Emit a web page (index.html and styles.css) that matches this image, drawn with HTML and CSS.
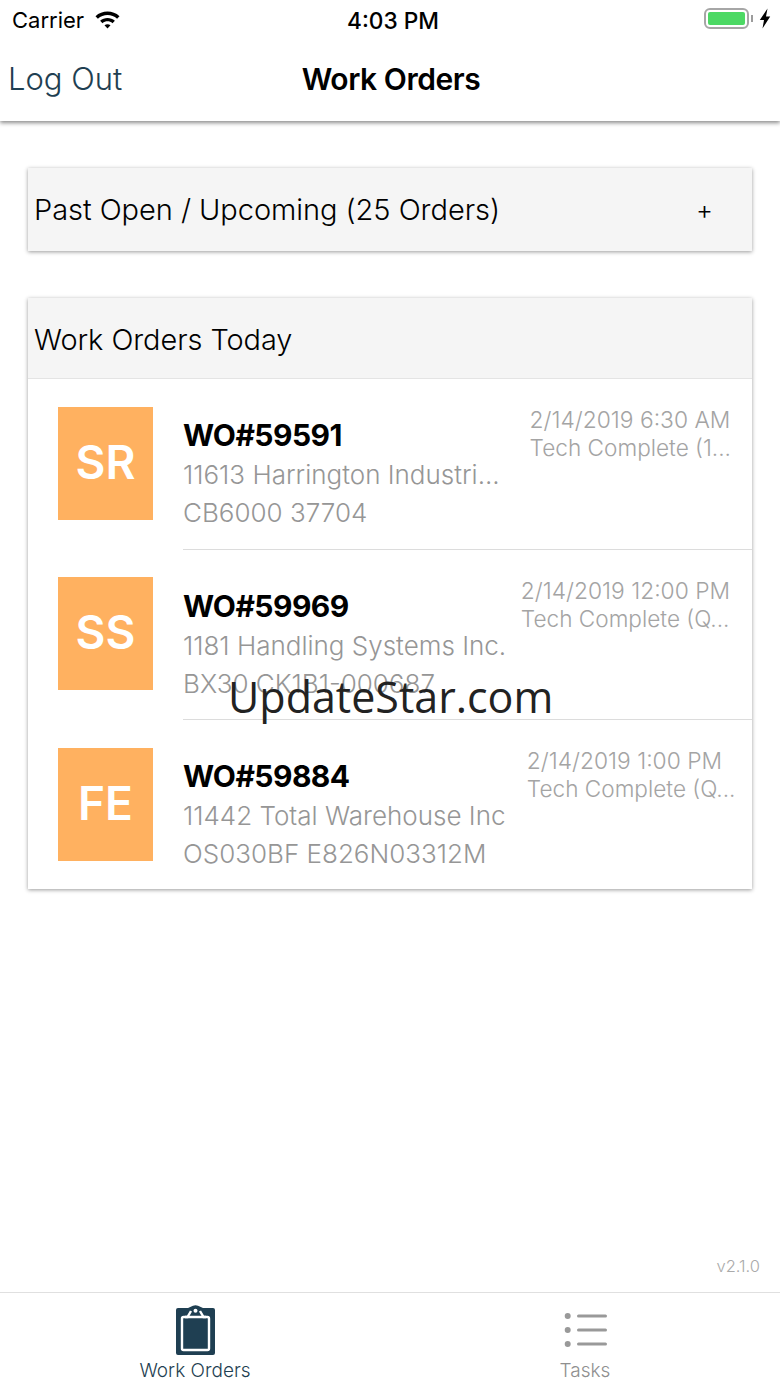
FILE: index.html
```html
<!DOCTYPE html>
<html lang="en">
<head>
  <meta charset="UTF-8" />
  <meta name="viewport" content="width=device-width, initial-scale=1.0" />
  <title>Work Orders</title>
  <link rel="stylesheet" href="styles.css">
</head>
<body>
  <div class="app">
    <header class="top">
      <div class="status-bar">
        <div class="status-left">
          <span>Carrier</span>
          <svg class="wifi" width="27" height="20" viewBox="0 0 26 20">
            <path d="M1 7.2C7.5 1 18.500 1 25 7.2L22.600 9.700C17.200 4.800 8.800 4.800 3.400 9.700Z" fill="#000"/>
            <path d="M5.600 11.700C9.800 8 16.200 8 20.400 11.700L18 14.200C15.100 11.700 10.900 11.700 8 14.200Z" fill="#000"/>
            <path d="M10 16.200C11.800 14.800 14.200 14.800 16 16.200L13 19.400Z" fill="#000"/>
          </svg>
        </div>
        <span class="clock">4:03 PM</span>
        <div class="status-right">
          <div class="battery"><div class="battery-fill"></div></div>
          <div class="battery-tip"></div>
          <svg class="bolt" width="12" height="21" viewBox="0 0 12 21">
            <path d="M8.500 0.500L0.800 12H5L3.500 20.500L11.200 8.500H7Z" fill="#000"/>
          </svg>
        </div>
      </div>
      <nav class="nav-bar">
        <a class="logout">Log Out</a>
        <h1 class="nav-title">Work Orders</h1>
      </nav>
    </header>

    <main class="content">
      <section class="card collapsed">
        <div class="card-head">
          <span>Past Open / Upcoming (25 Orders)</span>
          <span class="plus">+</span>
        </div>
      </section>

      <section class="card">
        <div class="card-head head-today">
          <span>Work Orders Today</span>
        </div>

        <div class="order">
          <div class="avatar">SR</div>
          <div class="order-body">
            <div class="order-main">
              <div class="wo">WO#59591</div>
              <div class="line">11613 Harrington Industri...</div>
              <div class="line">CB6000 37704</div>
            </div>
            <div class="order-side side-1">
              <div>2/14/2019 6:30 AM</div>
              <div class="side-status">Tech Complete (1...</div>
            </div>
          </div>
        </div>

        <div class="order">
          <div class="avatar">SS</div>
          <div class="order-body">
            <div class="order-main">
              <div class="wo">WO#59969</div>
              <div class="line">1181 Handling Systems Inc.</div>
              <div class="line">BX30 CK1B1-000687</div>
            </div>
            <div class="order-side side-2">
              <div>2/14/2019 12:00 PM</div>
              <div class="side-status">Tech Complete (Q...</div>
            </div>
          </div>
        </div>

        <div class="order">
          <div class="avatar">FE</div>
          <div class="order-body">
            <div class="order-main">
              <div class="wo">WO#59884</div>
              <div class="line">11442 Total Warehouse Inc</div>
              <div class="line">OS030BF E826N03312M</div>
            </div>
            <div class="order-side side-3">
              <div class="side-date">2/14/2019 1:00 PM</div>
              <div class="side-status">Tech Complete (Q...</div>
            </div>
          </div>
        </div>
      </section>
    </main>

    <div class="version">v2.1.0</div>

    <footer class="tabs">
      <div class="tab active">
        <svg class="clipboard" width="40" height="50" viewBox="0 0 40 50">
          <path fill="#1f3f52" d="M2 3H12L17 .8Q19.500 -.2 22 .8L27 3H37Q39 3 39 5V48Q39 50 37 50H2Q0 50 0 48V5Q0 3 2 3Z"/>
          <rect x="6" y="12" width="27" height="33" rx="1.500" fill="none" stroke="#fff" stroke-width="2.400"/>
          <path d="M9 12H11.500L15 6M30 12H27.500L24 6" fill="none" stroke="#fff" stroke-width="2.400"/>
          <circle cx="19.500" cy="5.800" r="2" fill="#fff"/>
        </svg>
        <span>Work Orders</span>
      </div>
      <div class="tab">
        <svg width="44" height="50" viewBox="0 0 44 50">
          <circle cx="4.700" cy="11" r="3" fill="#999"/>
          <circle cx="4.700" cy="25" r="3" fill="#999"/>
          <circle cx="4.700" cy="39" r="3" fill="#999"/>
          <rect x="14" y="9.500" width="30" height="3" rx="1.500" fill="#999"/>
          <rect x="14" y="23.500" width="30" height="3" rx="1.500" fill="#999"/>
          <rect x="14" y="37.500" width="30" height="3" rx="1.500" fill="#999"/>
        </svg>
        <span>Tasks</span>
      </div>
    </footer>

    <div class="watermark">UpdateStar.com</div>
  </div>
</body>
</html>
```

FILE: styles.css
```css
* {
  box-sizing: border-box;
}
html, body {
  margin: 0;
  padding: 0;
}
body {
  font-family: Inter, "Liberation Sans", sans-serif;
  background: #fff;
  color: #000;
}
.app {
  position: relative;
  width: 780px;
  height: 1387px;
  display: flex;
  flex-direction: column;
  overflow: hidden;
}

/* top bars */
.top {
  height: 121px;
  background: #fff;
  box-shadow: 0 2px 4px rgba(0, 0, 0, 0.45);
  flex: none;
}
.status-bar {
  height: 40px;
  display: flex;
  align-items: center;
  justify-content: space-between;
  padding: 0 9px 0 12px;
  font-size: 22px;
  position: relative;
}
.status-left {
  display: flex;
  align-items: center;
  gap: 10px;
}
.wifi {
  margin-top: -3px;
}
.clock {
  position: absolute;
  left: 347px;
  font-size: 22.700px;
  font-weight: 500;
}
.status-right {
  display: flex;
  align-items: center;
  margin-top: -3px;
}
.battery {
  width: 45px;
  height: 21px;
  border: 2px solid #a6a6a6;
  border-radius: 6px;
  padding: 2px;
}
.battery-fill {
  height: 100%;
  background: #4cd964;
  border-radius: 2px;
}
.battery-tip {
  width: 2px;
  height: 7px;
  background: #9c9c9c;
  margin: 0 6px 0 2px;
}
.nav-bar {
  height: 81px;
  display: flex;
  align-items: center;
  padding-bottom: 3px;
  position: relative;
}
.logout {
  padding: 0 0 2px 8px;
  font-size: 31px;
  font-weight: 300;
  color: #1f3f52;
}
.nav-title {
  position: absolute;
  left: 0;
  right: 0;
  margin: 0;
  padding-left: 2px;
  text-align: center;
  font-size: 30px;
  font-weight: 600;
  letter-spacing: -0.45px;
}

/* cards */
.content {
  flex: 1;
  padding: 47px 28px 0;
}
.card {
  background: #fff;
  box-shadow: 0 1px 4px rgba(0, 0, 0, 0.4);
}
.collapsed {
  margin-bottom: 47px;
}
.card-head {
  height: 83px;
  background: #f5f5f5;
  display: flex;
  align-items: center;
  justify-content: space-between;
  padding: 0 39px 0 6px;
  font-size: 29px;
  font-weight: 300;
  letter-spacing: -0.05px;
}
.head-today {
  height: 81px;
  padding-top: 3px;
  font-size: 28.900px;
  border-bottom: 1px solid #e4e4e4;
}
.plus {
  font-size: 26px;
}
.order {
  height: 170px;
  display: flex;
  padding: 28px 0 0 30px;
}
.order:last-child {
  padding-top: 29px;
}
.avatar {
  flex: none;
  width: 95px;
  height: 113px;
  padding-bottom: 4px;
  background: #ffb160;
  color: #fff;
  font-size: 46px;
  font-weight: 600;
  display: flex;
  align-items: center;
  justify-content: center;
}
.order-body {
  flex: 1;
  margin-left: 30px;
  margin-top: -28px;
  padding-top: 37px;
  display: flex;
  justify-content: space-between;
  border-top: 1px solid #dcdcdc;
}
.head-today + .order .order-body {
  border-top: none;
}
.order:last-child .order-body {
  margin-top: -29px;
}
.wo {
  font-size: 30px;
  font-weight: 700;
  line-height: 38px;
  letter-spacing: -0.55px;
  margin-bottom: 2px;
}
.line {
  font-size: 26px;
  font-weight: 300;
  color: #969696;
  line-height: 38px;
}
.order-side {
  font-size: 22.800px;
  font-weight: 300;
  color: #a4a4a4;
  line-height: 28px;
  margin-top: -10px;
  padding-right: 22px;
  white-space: nowrap;
}
.side-status {
  font-size: 22.600px;
}
.side-1 {
  padding-right: 21px;
}
.side-3 {
  padding-right: 16px;
}
.side-date {
  padding-right: 14px;
}

/* bottom */
.version {
  text-align: right;
  padding: 0 20px 16px 0;
  font-size: 16.500px;
  font-weight: 300;
  color: #aaa;
}
.tabs {
  flex: none;
  height: 95px;
  border-top: 1px solid #e0e0e0;
  display: flex;
}
.tab {
  flex: 1;
  display: flex;
  flex-direction: column;
  align-items: center;
  padding-top: 12px;
  font-size: 19px;
  font-weight: 300;
  color: #8f8f8f;
}
.tab.active {
  color: #1f3f52;
}
.tab span {
  margin-top: 4px;
}
.clipboard {
  margin-left: 2px;
}

.watermark {
  position: absolute;
  left: 228px;
  top: 668px;
  font-family: "Open Sans", sans-serif;
  font-size: 43px;
  line-height: 58px;
  color: #222;
}
```
